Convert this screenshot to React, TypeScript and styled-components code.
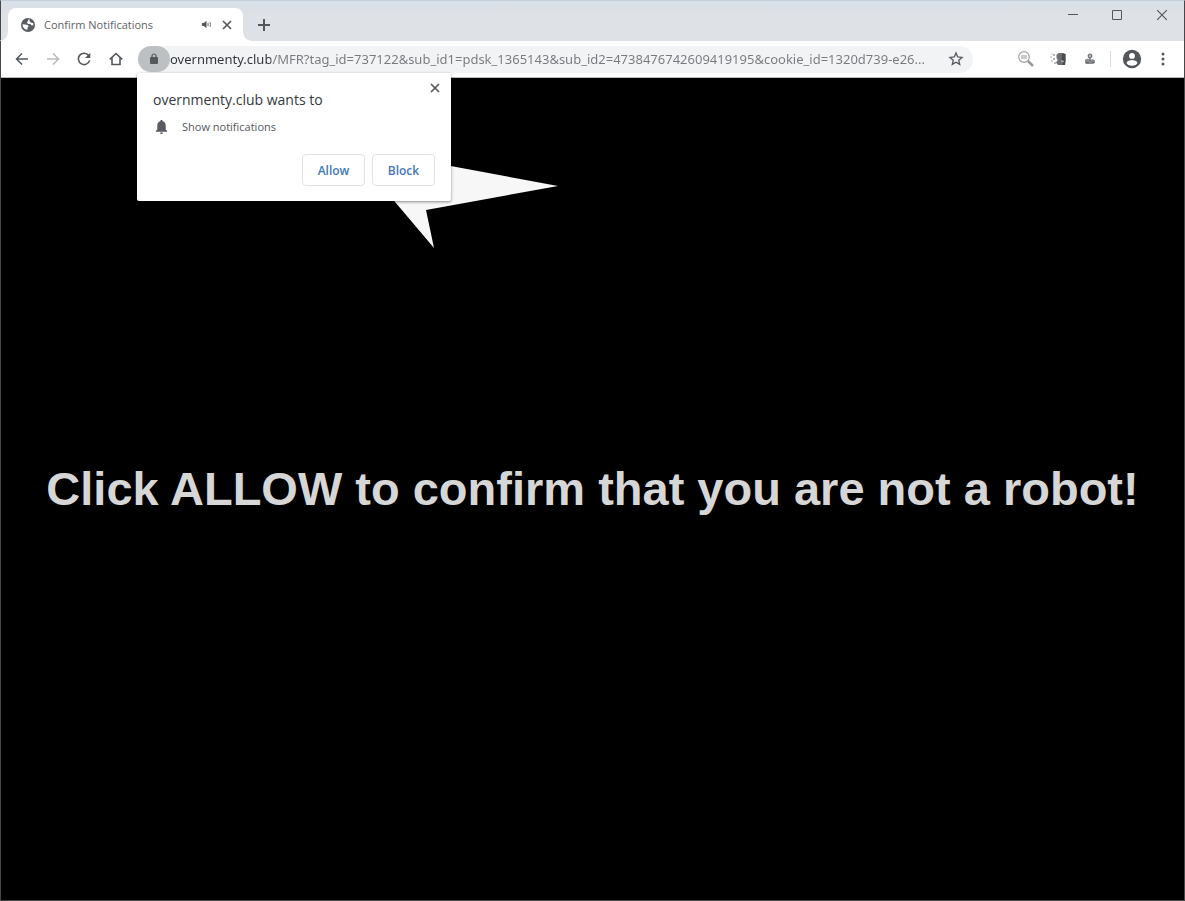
import React from 'react';
import styled, { createGlobalStyle } from 'styled-components';

const GlobalStyle = createGlobalStyle`
  * { box-sizing: border-box; }
  body { margin: 0; background: #000; font-family: "Open Sans", "Noto Sans", sans-serif; }
  button, input { font: inherit; color: inherit; }
  svg { display: block; flex: none; }
`;

const BrowserWindow = styled.div`
  position: relative;
  display: flex;
  flex-direction: column;
  min-height: 100vh;
  border: 1px solid #474747;
  border-top-color: #c3cfdb;
  background: #000;
`;

const TabStrip = styled.header`
  display: flex;
  align-items: flex-end;
  height: 40px;
  padding-left: 7px;
  background: linear-gradient(#d8e0e9, #dee1e6 12px);
`;

const Tab = styled.div`
  position: relative;
  display: flex;
  align-items: center;
  width: 235px;
  height: 33px;
  padding: 0 8px 0 12px;
  border-radius: 8px 8px 0 0;
  background: #fff;
  color: #5f6368;

  &::before, &::after {
    content: "";
    position: absolute;
    bottom: 0;
    width: 8px;
    height: 8px;
  }
  &::before { right: 100%; background: radial-gradient(circle at 0 0, transparent 7px, #fff 8px); }
  &::after { left: 100%; background: radial-gradient(circle at 100% 0, transparent 7px, #fff 8px); }
`;

const TabTitle = styled.span`
  flex: 1;
  margin-left: 8px;
  font-size: 11px;
  line-height: 16px;
  white-space: nowrap;
`;

const IconButton = styled.button<{ $width?: number; $height?: number }>`
  display: flex;
  flex: none;
  align-items: center;
  justify-content: center;
  width: ${({ $width = 16 }) => $width}px;
  height: ${({ $height = 16 }) => $height}px;
  padding: 0;
  border: 0;
  background: none;
  color: #54585d;
`;

const NewTabSlot = styled.div`
  display: flex;
  align-items: center;
  height: 33px;
  margin-left: 13px;
`;

const WindowControls = styled.div`
  display: flex;
  align-self: flex-start;
  margin-left: auto;
`;

const Toolbar = styled.nav`
  display: flex;
  align-items: center;
  height: 37px;
  padding: 0 6px 0 5px;
  background: #fff;
  border-bottom: 1px solid #b8babd;
`;

const AddressBar = styled.div`
  display: flex;
  flex: 1;
  align-items: center;
  min-width: 0;
  height: 27px;
  margin: 0 37px 0 6px;
  padding-right: 9px;
  border-radius: 14px;
  background: #f1f3f4;
`;

const SiteInfo = styled(IconButton)`
  border-radius: 14px;
  background: #bdc0c3;
`;

const AddressInput = styled.input`
  flex: 1;
  min-width: 0;
  height: 26px;
  margin-right: 12px;
  padding: 0;
  border: 0;
  outline: 0;
  background: linear-gradient(90deg, #303338 101px, #777a7e 101px);
  background-clip: text;
  -webkit-text-fill-color: transparent;
  font-family: "Noto Sans", "Open Sans", sans-serif;
  font-size: 13px;
  text-overflow: ellipsis;
`;

const Divider = styled.span`
  width: 1px;
  height: 16px;
  margin: 0 5px;
  background: #d8dadd;
`;

const Page = styled.main`
  display: flex;
  flex: 1;
  align-items: center;
  justify-content: center;
`;

const Message = styled.h1`
  margin: 0;
  color: #d6d6d6;
  font: bold 47px/56px "Liberation Sans", Arial, sans-serif;
  text-align: center;
`;

const Pointer = styled.svg`
  position: absolute;
  top: 149px;
  left: 379px;
`;

const Prompt = styled.section`
  position: absolute;
  top: 72px;
  left: 136px;
  width: 314px;
  height: 128px;
  padding: 17px 16px 15px;
  border-radius: 2px;
  background: #fff;
  box-shadow: 0 1px 3px rgba(0, 0, 0, 0.45);
`;

const PromptClose = styled(IconButton)`
  position: absolute;
  top: 7px;
  right: 8px;
`;

const PromptTitle = styled.h2`
  margin: 0;
  color: #35383c;
  font-size: 14px;
  font-weight: 400;
  line-height: 20px;
`;

const Permission = styled.div`
  display: flex;
  align-items: center;
  gap: 12px;
  margin-top: 9px;
  color: #55585d;
  font-size: 11px;
  line-height: 16px;
`;

const Actions = styled.div`
  display: flex;
  justify-content: flex-end;
  gap: 7px;
  margin-top: 19px;
`;

const ActionButton = styled.button`
  width: 63px;
  height: 32px;
  padding: 0;
  border: 1px solid #e0e2e5;
  border-radius: 4px;
  background: #fff;
  color: #4178b8;
  font-size: 12px;
  font-weight: 600;
`;

const line = { fill: 'none', stroke: 'currentColor' } as const;

const Globe = () => (
  <svg width="16" height="16" viewBox="0 0 16 16" aria-hidden="true">
    <circle cx="8" cy="8" r="7" fill="#5a5e63" />
    <path d="M2.500 7.200 5 7.500l2.700.5 1 1.600-1.300.8.200 2.200c-2.900.2-5.200-2.300-5.100-5.400ZM8.200 2.500h1.600l-.3 1.700 1.500 1.300 2.300.8v2.200l-2-.2-.9-1.400-2.200.2-1.500-1.500L8.200 4Z" fill="#fff" />
  </svg>
);

const Speaker = () => (
  <svg width="11" height="11" viewBox="0 0 12 12" aria-hidden="true">
    <path d="M1 4.300h2L6 1.800v8.400L3 7.700H1Z" fill="currentColor" />
    <path d="M7.700 4.200v3.600M9.800 3.400c.7 1.700.7 3.500 0 5.200" {...line} strokeWidth="1" />
  </svg>
);

const Cross = ({ size = 10, weight = 1.7 }: { size?: number; weight?: number }) => (
  <svg width={size} height={size} viewBox="0 0 10 10" aria-hidden="true">
    <path d="m1 1 8 8M9 1 1 9" {...line} strokeWidth={weight} />
  </svg>
);

const Plus = () => (
  <svg width="12" height="12" viewBox="0 0 12 12" aria-hidden="true">
    <path d="M6 0v12M0 6h12" {...line} strokeWidth="2" />
  </svg>
);

const Arrow = ({ forward = false }: { forward?: boolean }) => (
  <svg width="14" height="14" viewBox="0 0 14 14" aria-hidden="true">
    <path
      d={forward ? 'M1 7h11M7 1.500 12.500 7 7 12.500' : 'M13 7H2M7 1.500 1.500 7 7 12.500'}
      {...line}
      stroke={forward ? '#b8babd' : '#54585d'}
      strokeWidth="1.5"
    />
  </svg>
);

const Reload = () => (
  <svg width="14" height="14" viewBox="0 0 14 14" aria-hidden="true">
    <path d="M11.700 3.500A5.700 5.700 0 1 0 12.600 8.400" {...line} strokeWidth="1.6" />
    <path d="M13.300.8v5.300H8Z" fill="currentColor" />
  </svg>
);

const Home = () => (
  <svg width="14" height="14" viewBox="0 0 14 14" aria-hidden="true">
    <path d="M.8 7.300 7 1.500l6.200 5.800M3 5.800v6.700h8V5.800" {...line} strokeWidth="1.6" />
  </svg>
);

const Lock = () => (
  <svg width="10" height="12" viewBox="0 0 10 12" aria-hidden="true">
    <rect x="1" y="4" width="8" height="7" rx="1" fill="currentColor" />
    <path d="M3 5V3a2 2 0 0 1 4 0v2" {...line} strokeWidth="1.2" />
  </svg>
);

const Star = () => (
  <svg width="16" height="16" viewBox="0 0 16 16" aria-hidden="true">
    <path d="m8 2 1.700 4 4.300.4-3.300 2.800 1 4.200L8 11.200l-3.700 2.200 1-4.200L2 6.400 6.300 6Z" {...line} strokeWidth="1.3" />
  </svg>
);

const Magnifier = () => (
  <svg width="18" height="18" viewBox="0 0 18 18" aria-hidden="true">
    <circle cx="7" cy="7" r="5.300" fill="none" stroke="#a1a3a5" strokeWidth="1.2" />
    <path d="M4 6h6M4 8h6" stroke="#929496" strokeWidth="1.2" />
    <path d="m11 11 5 5" stroke="#999b9d" strokeWidth="2.5" />
  </svg>
);

const HeadIcon = () => (
  <svg width="18" height="16" viewBox="0 0 18 16" aria-hidden="true">
    <path d="M7.500 4 9.500 2H15l1.500 1.500v6L16 14H9l-2-2.500 1.800-2.200L7.500 7Z" fill="#6d6f73" />
    <path d="M13 3h3.500v7L16 14h-3l1-3-1.500-2Z" fill="#4a4c50" />
    <path d="m12 9.500 3 .2-.4 1.600-2.200-.4Z" fill="#aeb0b2" />
    <g fill="#989a9d">
      <circle cx="5" cy="4" r="1" /><circle cx="2" cy="6" r=".7" /><circle cx="5" cy="8" r="1" />
      <circle cx="3" cy="10" r=".8" /><circle cx="6" cy="12" r=".9" /><circle cx="3" cy="3" r=".6" />
    </g>
  </svg>
);

const StampIcon = () => (
  <svg width="12" height="12" viewBox="0 0 12 12" aria-hidden="true">
    <path d="m1 6.500 3-1 2 1.500 2.500-1L11 7.500V10l-3 1H2l-1-1Z" fill="#8d8f93" />
    <circle cx="6" cy="3" r="1.800" fill="#b5b7b9" stroke="#777a7e" strokeWidth="1.3" />
    <path d="M6 5v3M2 9.500h3M7.500 9.500H10" stroke="#686b70" strokeWidth="1.3" />
  </svg>
);

const Avatar = () => (
  <svg width="20" height="20" viewBox="0 0 20 20" aria-hidden="true">
    <circle cx="10" cy="10" r="9.200" fill="#54585d" />
    <circle cx="10" cy="6.900" r="2.900" fill="#fff" />
    <path d="M4.500 14c.6-2 3.700-2.900 5.500-2.900s4.900.9 5.500 2.900a6.700 6.700 0 0 1-11 0Z" fill="#fff" />
  </svg>
);

const Dots = () => (
  <svg width="4" height="14" viewBox="0 0 4 14" fill="currentColor" aria-hidden="true">
    <circle cx="2" cy="2" r="1.500" /><circle cx="2" cy="7" r="1.500" /><circle cx="2" cy="12" r="1.500" />
  </svg>
);

const Minimise = () => (
  <svg width="12" height="12" viewBox="0 0 12 12" aria-hidden="true">
    <path d="M1 5.500h10" {...line} />
  </svg>
);

const Maximise = () => (
  <svg width="12" height="12" viewBox="0 0 12 12" aria-hidden="true">
    <path d="M1.500 1.500h9v9h-9Z" {...line} />
  </svg>
);

const Bell = () => (
  <svg width="17" height="16" viewBox="0 0 17 16" aria-hidden="true">
    <path d="M8.500 1c.7 0 1.200.5 1.200 1.200 2 .5 3 2.100 3 4.200v4l1.500 1.500v.8H2.800v-.8l1.500-1.500v-4c0-2.100 1-3.700 3-4.200C7.300 1.500 7.800 1 8.500 1ZM7 13.500h3a1.500 1.500 0 0 1-3 0Z" fill="#5b5961" />
  </svg>
);

export default function App() {
  return (
    <>
      <GlobalStyle />
      <BrowserWindow>
        <TabStrip>
          <Tab>
            <Globe />
            <TabTitle>Confirm Notifications</TabTitle>
            <IconButton aria-label="Mute tab" $width={26}><Speaker /></IconButton>
            <IconButton aria-label="Close tab"><Cross /></IconButton>
          </Tab>
          <NewTabSlot>
            <IconButton aria-label="New tab"><Plus /></IconButton>
          </NewTabSlot>
          <WindowControls>
            <IconButton aria-label="Minimise" $width={44} $height={28}><Minimise /></IconButton>
            <IconButton aria-label="Maximise" $width={44} $height={28}><Maximise /></IconButton>
            <IconButton aria-label="Close window" $width={45} $height={28}><Cross size={12} weight={1} /></IconButton>
          </WindowControls>
        </TabStrip>
        <Toolbar aria-label="Browser toolbar">
          <IconButton aria-label="Back" $width={31} $height={28}><Arrow /></IconButton>
          <IconButton aria-label="Forward" $width={31} $height={28} disabled><Arrow forward /></IconButton>
          <IconButton aria-label="Reload" $width={32} $height={28}><Reload /></IconButton>
          <IconButton aria-label="Home" $width={32} $height={28}><Home /></IconButton>
          <AddressBar>
            <SiteInfo aria-label="Site information" $width={32} $height={26}><Lock /></SiteInfo>
            <AddressInput
              aria-label="Address"
              defaultValue="overnmenty.club/MFR?tag_id=737122&sub_id1=pdsk_1365143&sub_id2=4738476742609419195&cookie_id=1320d739-e26..."
            />
            <IconButton aria-label="Bookmark this page"><Star /></IconButton>
          </AddressBar>
          <IconButton aria-label="Search extension" $width={32} $height={28}><Magnifier /></IconButton>
          <IconButton aria-label="Privacy extension" $width={32} $height={28}><HeadIcon /></IconButton>
          <IconButton aria-label="Tools extension" $width={31} $height={28}><StampIcon /></IconButton>
          <Divider />
          <IconButton aria-label="Profile" $width={32} $height={28}><Avatar /></IconButton>
          <IconButton aria-label="Menu" $width={30} $height={28}><Dots /></IconButton>
        </Toolbar>
        <Page>
          <Message>Click ALLOW to confirm that you are not a robot!</Message>
        </Page>
        <Pointer width="180" height="100" viewBox="380 150 180 100" aria-hidden="true">
          <path d="M390 196 434 248 426 210 558 186 440 164Z" fill="#f7f7f7" />
        </Pointer>
        <Prompt role="dialog" aria-labelledby="prompt-title">
          <PromptTitle id="prompt-title">overnmenty.club wants to</PromptTitle>
          <PromptClose aria-label="Dismiss"><Cross /></PromptClose>
          <Permission><Bell />Show notifications</Permission>
          <Actions>
            <ActionButton>Allow</ActionButton>
            <ActionButton>Block</ActionButton>
          </Actions>
        </Prompt>
      </BrowserWindow>
    </>
  );
}
